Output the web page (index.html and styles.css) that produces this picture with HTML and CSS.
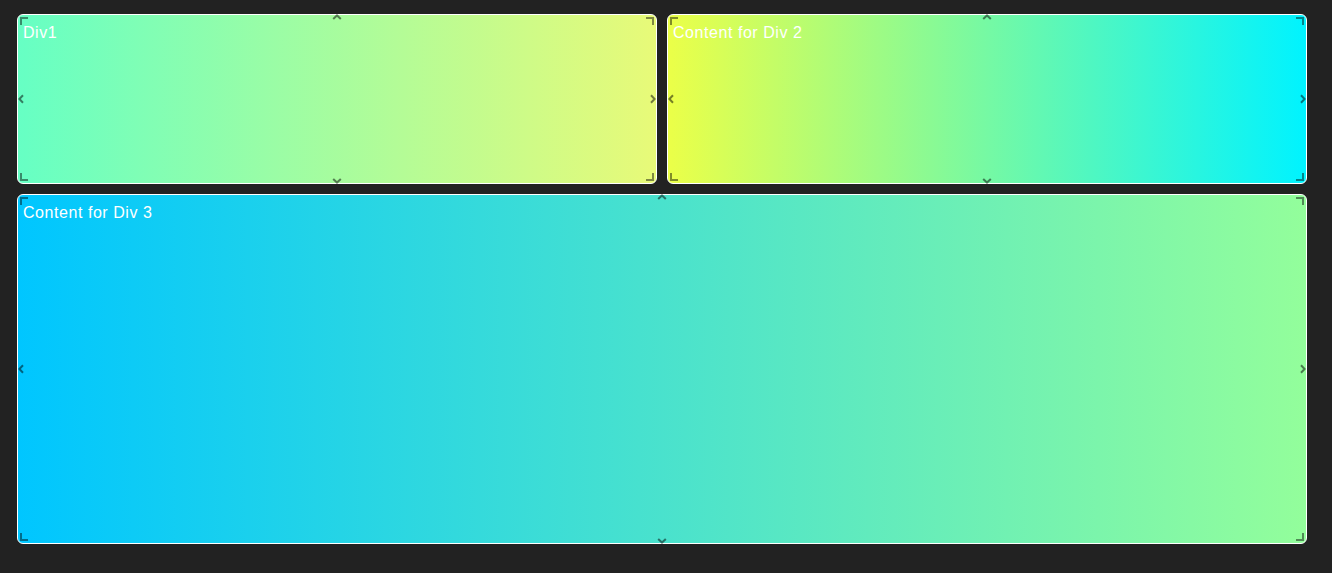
FILE: index.html
```html
<!DOCTYPE html>
<html>
<head>
<meta charset="utf-8">
<link rel="stylesheet" href="styles.css">
</head>
<body>
<div class="layout">
  <div class="panel p1">
    <span class="label">Div1</span>
    <span class="corner tl"></span><span class="corner tr"></span><span class="corner bl"></span><span class="corner br"></span>
    <svg class="chev top" viewBox="0 0 10 6"><path d="M1.2 5 L5 1.4 L8.8 5"/></svg>
    <svg class="chev bottom" viewBox="0 0 10 6"><path d="M1.2 1 L5 4.6 L8.8 1"/></svg>
    <svg class="chev left" viewBox="0 0 6 10"><path d="M5 1.2 L1.4 5 L5 8.8"/></svg>
    <svg class="chev right" viewBox="0 0 6 10"><path d="M1 1.2 L4.6 5 L1 8.8"/></svg>
  </div>
  <div class="panel p2">
    <span class="label">Content for Div 2</span>
    <span class="corner tl"></span><span class="corner tr"></span><span class="corner bl"></span><span class="corner br"></span>
    <svg class="chev top" viewBox="0 0 10 6"><path d="M1.2 5 L5 1.4 L8.8 5"/></svg>
    <svg class="chev bottom" viewBox="0 0 10 6"><path d="M1.2 1 L5 4.6 L8.8 1"/></svg>
    <svg class="chev left" viewBox="0 0 6 10"><path d="M5 1.2 L1.4 5 L5 8.8"/></svg>
    <svg class="chev right" viewBox="0 0 6 10"><path d="M1 1.2 L4.6 5 L1 8.8"/></svg>
  </div>
  <div class="panel p3">
    <span class="label">Content for Div 3</span>
    <span class="corner tl"></span><span class="corner tr"></span><span class="corner bl"></span><span class="corner br"></span>
    <svg class="chev top" viewBox="0 0 10 6"><path d="M1.2 5 L5 1.4 L8.8 5"/></svg>
    <svg class="chev bottom" viewBox="0 0 10 6"><path d="M1.2 1 L5 4.6 L8.8 1"/></svg>
    <svg class="chev left" viewBox="0 0 6 10"><path d="M5 1.2 L1.4 5 L5 8.8"/></svg>
    <svg class="chev right" viewBox="0 0 6 10"><path d="M1 1.2 L4.6 5 L1 8.8"/></svg>
  </div>
</div>
</body>
</html>
```

FILE: styles.css
```css
html, body {
  margin: 0;
  padding: 0;
  background: #222222;
  height: 100%;
}
body {
  font-family: "Liberation Sans", Arial, sans-serif;
}
.layout {
  display: grid;
  grid-template-columns: 640px 640px;
  grid-template-rows: 170px 350px;
  gap: 10px;
  padding: 14px 0 0 17px;
  width: 1290px;
}
.panel {
  position: relative;
  box-sizing: border-box;
  border: 1px solid #ffffff;
  border-radius: 6px;
  padding: 9px 5px;
  color: #ffffff;
  font-size: 16px;
  line-height: 18px;
  letter-spacing: 0.55px;
}
.p1 { background: linear-gradient(to right, #66ffc4, #e8fa78); }
.p2 { background: linear-gradient(to right, #ebff48, #00f3ff); }
.p3 {
  grid-column: 1 / 3;
  background: linear-gradient(to right, #00c6ff, #93fe9b);
}
.corner {
  position: absolute;
  width: 6px;
  height: 6px;
  border-color: rgba(0, 0, 0, 0.45);
  border-style: solid;
  border-width: 0;
}
.corner.tl { top: 2px; left: 2px; border-top-width: 2px; border-left-width: 2px; }
.corner.tr { top: 2px; right: 2px; border-top-width: 2px; border-right-width: 2px; }
.corner.bl { bottom: 2px; left: 2px; border-bottom-width: 2px; border-left-width: 2px; }
.corner.br { bottom: 2px; right: 2px; border-bottom-width: 2px; border-right-width: 2px; }
.chev {
  position: absolute;
  fill: none;
  stroke: rgba(0, 0, 0, 0.5);
  stroke-width: 2;
}
.chev.top { top: -1px; left: calc(50% - 5px); width: 10px; height: 6px; }
.chev.bottom { bottom: -1px; left: calc(50% - 5px); width: 10px; height: 6px; }
.chev.left { left: 0; top: calc(50% - 5px); width: 6px; height: 10px; }
.chev.right { right: 0; top: calc(50% - 5px); width: 6px; height: 10px; }
```
